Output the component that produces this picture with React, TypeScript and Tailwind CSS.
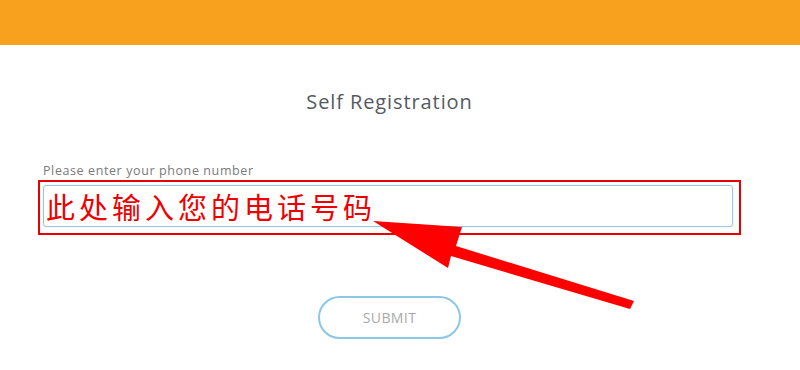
import React from "react";

const cjk = { fontFamily: '"Noto Sans CJK SC", "Noto Sans", sans-serif' };

function Arrow() {
  return (
    <svg className="absolute left-0 top-0 pointer-events-none" width="800" height="370" viewBox="0 0 800 370">
      <polygon points="373,221 462,227 456,246 634,301 630,309 451,256 448,268" fill="#ff0000" />
    </svg>
  );
}

export default function App() {
  return (
    <div className="relative w-[800px] h-[370px] bg-white overflow-hidden" style={{ fontFamily: '"Open Sans", "Noto Sans", sans-serif' }}>
      <header className="h-[45px] bg-[#f7a11f]" />

      <main className="ml-[38px] w-[703px]">
        <h1 className="mt-[44px] text-center text-[20px] leading-[26px] text-[#555a5f] tracking-[0.9px]">Self Registration</h1>

        <label className="block mt-[49px] ml-[5px] text-[12.5px] leading-[14px] text-[#7a7a7a] tracking-[0.6px]">
          Please enter your phone number
        </label>

        <div className="mt-[2px] border-2 border-[#e60000] p-[3px] pr-[6px] h-[55px]">
          <div className="h-[42px] rounded-[3px] border border-[#9cc6e6] shadow-[0_0_2px_#cfe6f7] flex items-center pl-[2px]">
            <span className="text-[29px] leading-none text-[#ee0000] tracking-[4px]" style={cjk}>
              此处输入您的电话号码
            </span>
          </div>
        </div>

        <div className="flex justify-center mt-[61px]">
          <button className="w-[143px] h-[43px] rounded-full border-2 border-[#8cc8e6] text-[14px] text-[#a9a9a9] tracking-[0.4px] bg-white">
            SUBMIT
          </button>
        </div>
      </main>

      <Arrow />
    </div>
  );
}
